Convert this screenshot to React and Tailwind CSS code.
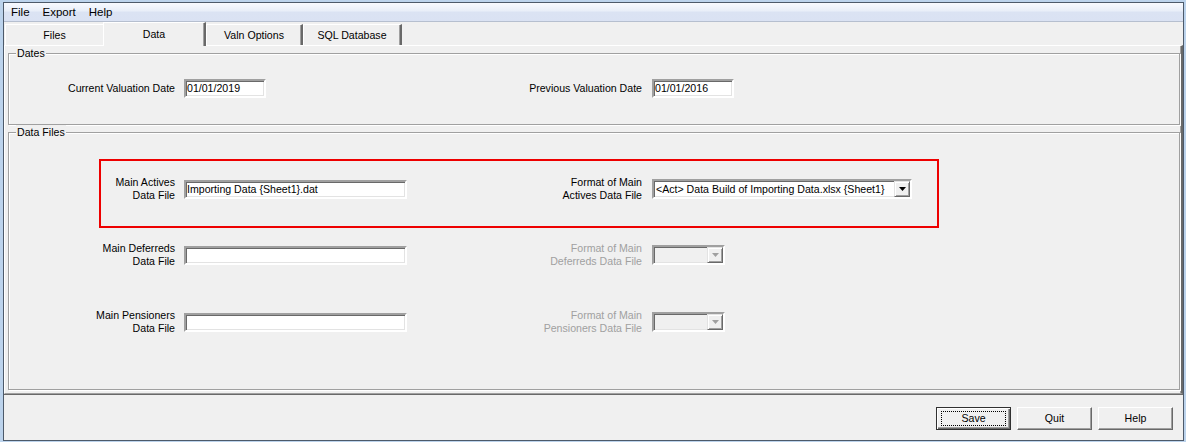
import React from 'react';

const font = { fontFamily: '"Liberation Sans", Arial, sans-serif' };

function TextBox({ width, value, disabled }) {
  return (
    <div
      className={`h-[19px] border-2 border-t-[#a0a0a0] border-l-[#a0a0a0] border-b-white border-r-white shadow-[inset_1px_1px_0_#696969,inset_-1px_-1px_0_#e3e3e3] ${disabled ? 'bg-[#f0f0f0]' : 'bg-white'} pl-[1px] text-[10.6px] leading-[15px] text-black whitespace-nowrap overflow-hidden`}
      style={{ width }}
    >
      {value}
    </div>
  );
}

function Arrow({ color }) {
  return (
    <svg width="7" height="4" viewBox="0 0 7 4">
      <polygon points="0,0 7,0 3.5,4" fill={color} />
    </svg>
  );
}

function Combo({ width, value, disabled }) {
  return (
    <div
      className={`h-[20px] flex items-stretch border-2 border-t-[#a0a0a0] border-l-[#a0a0a0] border-b-white border-r-white shadow-[inset_1px_1px_0_#696969,inset_-1px_-1px_0_#e3e3e3] ${disabled ? 'bg-[#f0f0f0]' : 'bg-white'}`}
      style={{ width }}
    >
      <div className="flex-1 pl-[2px] text-[10.6px] leading-[16px] text-black whitespace-nowrap overflow-hidden">{value}</div>
      <div className="w-[16px] h-[16px] border border-t-[#e3e3e3] border-l-[#e3e3e3] border-b-[#696969] border-r-[#696969] bg-[#f0f0f0] shadow-[inset_1px_1px_0_#fff,inset_-1px_-1px_0_#a0a0a0] flex items-center justify-center">
        <Arrow color={disabled ? '#a0a0a0' : '#000'} />
      </div>
    </div>
  );
}

function GroupBox({ title, className, children }) {
  return (
    <div className={`relative border border-[#a0a0a0] shadow-[inset_1px_1px_0_#fff,1px_1px_0_#fff] ml-[3px] mr-[1px] ${className}`}>
      <div className="absolute left-[7px] top-[-8px] px-[1px] bg-[#f0f0f0] text-[10.6px] leading-[14px] text-black">{title}</div>
      {children}
    </div>
  );
}

function Label({ width, lines, disabled }) {
  return (
    <div className={`text-right text-[10.6px] leading-[13px] ${disabled ? 'text-[#a0a0a0]' : 'text-black'}`} style={{ width }}>
      {lines.map((l) => (
        <div key={l}>{l}</div>
      ))}
    </div>
  );
}

function Tab({ label, selected, width, noRight }) {
  if (selected) {
    return (
      <div
        className="relative h-[24px] mb-[-1px] bg-[#f0f0f0] border-l border-t border-l-white border-t-white border-r-2 border-r-[#696969] shadow-[inset_-1px_0_0_#a0a0a0] flex items-center justify-center text-[10.6px] text-black"
        style={{ width }}
      >
        {label}
      </div>
    );
  }
  return (
    <div
      className={`h-[21px] bg-[#f0f0f0] border-l border-t border-l-white border-t-white ${noRight ? '' : 'border-r-2 border-r-[#696969] shadow-[inset_-1px_0_0_#a0a0a0]'} flex items-center justify-center pt-[1px] text-[10.6px] text-black`}
      style={{ width }}
    >
      {label}
    </div>
  );
}

function Button({ label, isDefault }) {
  return (
    <div
      className={`w-[75px] h-[23px] bg-[#f0f0f0] flex items-center justify-center text-[10.6px] text-black ${isDefault ? 'border border-[#303030] shadow-[inset_1px_1px_0_#fff,inset_-1px_-1px_0_#696969,inset_-2px_-2px_0_#a0a0a0]' : 'border border-t-white border-l-white border-b-[#696969] border-r-[#696969] shadow-[inset_-1px_-1px_0_#a0a0a0]'}`}
    >
      {isDefault ? (
        <div className="w-[65px] h-[15px] border border-dotted border-black flex items-center justify-center">{label}</div>
      ) : (
        label
      )}
    </div>
  );
}

export default function App() {
  return (
    <div className="w-[1186px] h-[442px] bg-[#bcd3ec] pl-[3px] pt-[2px] pr-[2px] pb-[1px]" style={font}>
      <div className="h-full border border-[#4d5a6a] bg-[#f0f0f0] flex flex-col">
        {/* menu */}
        <div className="h-[19px] border-b border-[#b6bfcf] bg-[linear-gradient(#f8faff,#e8eef8_45%,#dbe3f3_50%,#dae2f3)] flex items-center pl-[7px] gap-[13px] text-[11.5px] text-black leading-[18px]">
          <span>File</span>
          <span>Export</span>
          <span>Help</span>
        </div>

        {/* tabs */}
        <div className="h-[23px] flex items-end pl-[1px]">
          <Tab label="Files" width={98} noRight />
          <Tab label="Data" width={103} selected />
          <Tab label="Valn Options" width={97} />
          <Tab label="SQL Database" width={99} />
        </div>

        {/* tab page */}
        <div className="h-[349px] border-t border-l border-t-white border-l-white border-r-2 border-r-[#696969] border-b border-b-[#a0a0a0] shadow-[inset_-1px_0_0_#a0a0a0] pt-[7px]">
          <GroupBox title="Dates" className="h-[72px] pt-[25px]">
            <div className="flex items-center">
              <Label width={166} lines={['Current Valuation Date']} />
              <div className="ml-[9px]">
                <TextBox width={82} value="01/01/2019" />
              </div>
              <Label width={376} lines={['Previous Valuation Date']} />
              <div className="ml-[10px]">
                <TextBox width={82} value="01/01/2016" />
              </div>
            </div>
          </GroupBox>

          <GroupBox title="Data Files" className="h-[258px] mt-[7px] pt-[46px]">
            <div className="absolute left-[90px] top-[26px] w-[840px] h-[69px] border-2 border-[#ee0000]" />
            <div className="flex items-center h-[20px]">
              <Label width={166} lines={['Main Actives', 'Data File']} />
              <div className="ml-[9px]">
                <TextBox width={223} value="Importing Data {Sheet1}.dat" />
              </div>
              <Label width={235} lines={['Format of Main', 'Actives Data File']} />
              <div className="ml-[10px]">
                <Combo width={260} value="<Act> Data Build of Importing Data.xlsx {Sheet1}" />
              </div>
            </div>
            <div className="flex items-center h-[20px] mt-[46px]">
              <Label width={166} lines={['Main Deferreds', 'Data File']} />
              <div className="ml-[9px]">
                <TextBox width={223} value="" />
              </div>
              <Label width={235} lines={['Format of Main', 'Deferreds Data File']} disabled />
              <div className="ml-[10px]">
                <Combo width={73} value="" disabled />
              </div>
            </div>
            <div className="flex items-center h-[20px] mt-[47px]">
              <Label width={166} lines={['Main Pensioners', 'Data File']} />
              <div className="ml-[9px]">
                <TextBox width={223} value="" />
              </div>
              <Label width={235} lines={['Format of Main', 'Pensioners Data File']} disabled />
              <div className="ml-[10px]">
                <Combo width={73} value="" disabled />
              </div>
            </div>
          </GroupBox>
        </div>

        {/* bottom buttons */}
        <div className="flex-1 border-t border-[#696969] flex items-start justify-end gap-[6px] pr-[10px] pt-[12px]">
          <Button label="Save" isDefault />
          <Button label="Quit" />
          <Button label="Help" />
        </div>
      </div>
    </div>
  );
}
